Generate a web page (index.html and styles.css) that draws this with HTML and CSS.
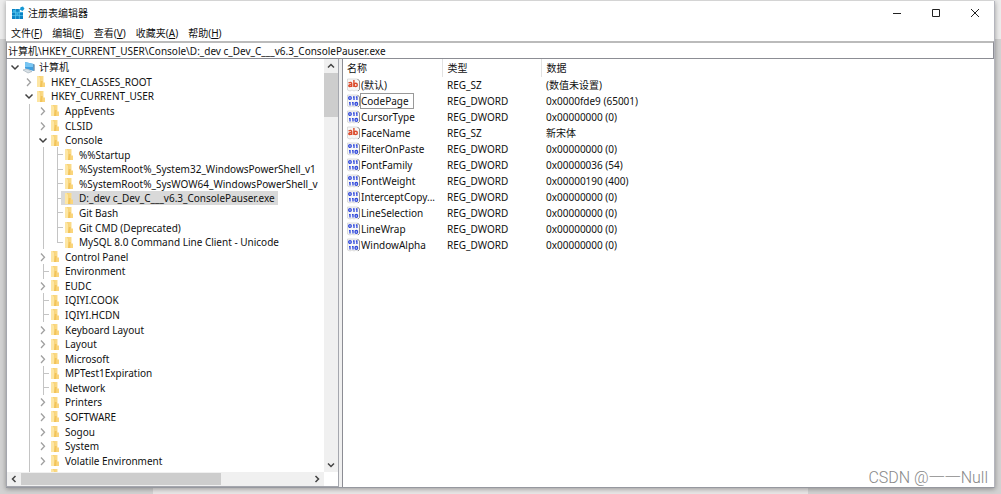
FILE: index.html
```html
<!DOCTYPE html>
<html lang="zh-CN">
<head>
<meta charset="utf-8">
<title>注册表编辑器</title>
<link rel="stylesheet" href="styles.css">
</head>
<body>
<svg class="sprite" aria-hidden="true">
  <defs>
    <linearGradient id="gold" x1="0" x2="1"><stop offset="0" stop-color="#f6cd68"/><stop offset="1" stop-color="#fbdc8c"/></linearGradient>
    <symbol id="folder" viewBox="0 0 10 13"><path d="M1 1h6.500v11H1z" fill="url(#gold)"/><path d="M1 1h1.500l1.500 2v9H1z" fill="#fde6a4"/><path d="M4.800 6h1.800v6H4z" fill="#f2c45a"/><path d="M6.500 7.500H9V12H6.500z" fill="#fad57c"/></symbol>
    <symbol id="right" viewBox="0 0 14 14"><path d="M5 3.500 8.500 7.300 5 11" fill="none" stroke="#a0a0a0" stroke-width="1.300"/></symbol>
    <symbol id="down" viewBox="0 0 14 14"><path d="M3.500 5.500 7 9l3.500-3.500" fill="none" stroke="#404040" stroke-width="1.500"/></symbol>
    <symbol id="string" viewBox="0 0 13 14"><path d="M.5 1h10l2 2v8.500l-1.500 1.500-2-1-2 1-2-1-2 1-2.500-1z" fill="#f7f7f7" stroke="#cfcfcf" stroke-width=".7"/><path d="M10.500 1l2 2v8.500L11 13" fill="none" stroke="#8b8b8b" stroke-width=".9"/><g fill="none" stroke="#dc4b2c" stroke-width="1.400"><path d="M1.500 4.900q3.200-1.200 3.200.8v3.200M4.700 6.400c-4-.2-3.700 3.300-.2 1.700M6.900 2v7"/><ellipse cx="8.700" cy="6.900" rx="1.600" ry="1.600"/></g></symbol>
    <symbol id="binary" viewBox="0 0 13 14"><path d="M.5 1h10l2 2v8.500l-1.500 1.500-2-1-2 1-2-1-2 1-2.500-1z" fill="#f7f7f7" stroke="#cfcfcf" stroke-width=".7"/><path d="M10.500 1l2 2v8.500L11 13" fill="none" stroke="#8b8b8b" stroke-width=".9"/><g fill="none" stroke="#3049dc" stroke-width="1.300"><ellipse cx="3" cy="4" rx="1.300" ry="1.400"/><path d="M6 3h1v3M8.900 3h1v3M2 8.600h1v3M5 8.600h1v3"/><ellipse cx="9.300" cy="9.900" rx="1.300" ry="1.400"/></g></symbol>
  </defs>
</svg>
<div class="desktop">
<main class="window">
  <header class="titlebar">
    <svg class="app-icon" viewBox="0 0 14 14"><path d="M1 3h8v3h3v7H1z" fill="#0b82c4"/><path d="M9.500 1.200 12 .5l1.500 2.300L11.500 5 9 3.700z" fill="#1598d4"/><path d="M1 6.300h11M1 9.600h11M4.600 3v10M8.300 3v10" stroke="#63d0f5" stroke-width=".7"/><path d="M2 4h2v2H2zM5.300 7h2v2h-2z" fill="#35b5e8"/></svg>
    <h1 class="title">注册表编辑器</h1>
    <div class="caption">
      <button aria-label="最小化"><svg viewBox="0 0 10 10"><path d="M1 5.500h8" /></svg></button>
      <button aria-label="最大化"><svg viewBox="0 0 10 10"><path d="M1.500 1.500h7v7h-7z"/></svg></button>
      <button aria-label="关闭"><svg viewBox="0 0 10 10"><path d="m1 1 8 8M9 1 1 9"/></svg></button>
    </div>
  </header>
  <nav class="menubar">
    <button>文件(<u>F</u>)</button><button>编辑(<u>E</u>)</button><button>查看(<u>V</u>)</button><button>收藏夹(<u>A</u>)</button><button>帮助(<u>H</u>)</button>
  </nav>
  <input class="address" aria-label="地址" value="计算机\HKEY_CURRENT_USER\Console\D:_dev c_Dev_C___v6.3_ConsolePauser.exe">
  <div class="panes">
    <section class="tree-pane">
      <ul class="tree" role="tree">
        <li role="treeitem" aria-level="1"><svg class="node"><use href="#down"/></svg><svg class="computer" viewBox="0 0 14 13"><path d="M3 1l8.500 2v7L3 7.500z" fill="#3f9fe0"/><path d="M3 1l8.500 2v3L3 6z" fill="#78c5f2"/><path d="M11.500 3l1 .5v6.300l-1 .2z" fill="#35648e"/><path d="M1 9l4-1 5 2.500-4 1.500z" fill="#d7e0e6" stroke="#9caab3" stroke-width=".6"/></svg><span>计算机</span></li>
        <li role="treeitem" aria-level="2"><i></i><svg class="node"><use href="#right"/></svg><svg class="folder"><use href="#folder"/></svg><span>HKEY_CLASSES_ROOT</span></li>
        <li role="treeitem" aria-level="2"><i></i><svg class="node"><use href="#down"/></svg><svg class="folder"><use href="#folder"/></svg><span>HKEY_CURRENT_USER</span></li>
        <li role="treeitem" aria-level="3"><i></i><i class="line"></i><svg class="node"><use href="#right"/></svg><svg class="folder"><use href="#folder"/></svg><span>AppEvents</span></li>
        <li role="treeitem" aria-level="3"><i></i><i class="line"></i><svg class="node"><use href="#right"/></svg><svg class="folder"><use href="#folder"/></svg><span>CLSID</span></li>
        <li role="treeitem" aria-level="3"><i></i><i class="line"></i><svg class="node"><use href="#down"/></svg><svg class="folder"><use href="#folder"/></svg><span>Console</span></li>
        <li role="treeitem" aria-level="4"><i></i><i class="line"></i><i class="line"></i><i class="line leaf"></i><svg class="folder"><use href="#folder"/></svg><span>%%Startup</span></li>
        <li role="treeitem" aria-level="4"><i></i><i class="line"></i><i class="line"></i><i class="line leaf"></i><svg class="folder"><use href="#folder"/></svg><span>%SystemRoot%_System32_WindowsPowerShell_v1</span></li>
        <li role="treeitem" aria-level="4"><i></i><i class="line"></i><i class="line"></i><i class="line leaf"></i><svg class="folder"><use href="#folder"/></svg><span>%SystemRoot%_SysWOW64_WindowsPowerShell_v</span></li>
        <li role="treeitem" aria-level="4" aria-selected="true"><i></i><i class="line"></i><i class="line"></i><i class="line leaf"></i><b class="selected"><svg class="folder"><use href="#folder"/></svg><span>D:_dev c_Dev_C___v6.3_ConsolePauser.exe</span></b></li>
        <li role="treeitem" aria-level="4"><i></i><i class="line"></i><i class="line"></i><i class="line leaf"></i><svg class="folder"><use href="#folder"/></svg><span>Git Bash</span></li>
        <li role="treeitem" aria-level="4"><i></i><i class="line"></i><i class="line"></i><i class="line leaf"></i><svg class="folder"><use href="#folder"/></svg><span>Git CMD (Deprecated)</span></li>
        <li role="treeitem" aria-level="4"><i></i><i class="line"></i><i class="line"></i><i class="line leaf last"></i><svg class="folder"><use href="#folder"/></svg><span>MySQL 8.0 Command Line Client - Unicode</span></li>
        <li role="treeitem" aria-level="3"><i></i><i class="line"></i><svg class="node"><use href="#right"/></svg><svg class="folder"><use href="#folder"/></svg><span>Control Panel</span></li>
        <li role="treeitem" aria-level="3"><i></i><i class="line"></i><i class="line leaf"></i><svg class="folder"><use href="#folder"/></svg><span>Environment</span></li>
        <li role="treeitem" aria-level="3"><i></i><i class="line"></i><svg class="node"><use href="#right"/></svg><svg class="folder"><use href="#folder"/></svg><span>EUDC</span></li>
        <li role="treeitem" aria-level="3"><i></i><i class="line"></i><i class="line leaf"></i><svg class="folder"><use href="#folder"/></svg><span>IQIYI.COOK</span></li>
        <li role="treeitem" aria-level="3"><i></i><i class="line"></i><i class="line leaf"></i><svg class="folder"><use href="#folder"/></svg><span>IQIYI.HCDN</span></li>
        <li role="treeitem" aria-level="3"><i></i><i class="line"></i><svg class="node"><use href="#right"/></svg><svg class="folder"><use href="#folder"/></svg><span>Keyboard Layout</span></li>
        <li role="treeitem" aria-level="3"><i></i><i class="line"></i><svg class="node"><use href="#right"/></svg><svg class="folder"><use href="#folder"/></svg><span>Layout</span></li>
        <li role="treeitem" aria-level="3"><i></i><i class="line"></i><svg class="node"><use href="#right"/></svg><svg class="folder"><use href="#folder"/></svg><span>Microsoft</span></li>
        <li role="treeitem" aria-level="3"><i></i><i class="line"></i><i class="line leaf"></i><svg class="folder"><use href="#folder"/></svg><span>MPTest1Expiration</span></li>
        <li role="treeitem" aria-level="3"><i></i><i class="line"></i><i class="line leaf"></i><svg class="folder"><use href="#folder"/></svg><span>Network</span></li>
        <li role="treeitem" aria-level="3"><i></i><i class="line"></i><svg class="node"><use href="#right"/></svg><svg class="folder"><use href="#folder"/></svg><span>Printers</span></li>
        <li role="treeitem" aria-level="3"><i></i><i class="line"></i><svg class="node"><use href="#right"/></svg><svg class="folder"><use href="#folder"/></svg><span>SOFTWARE</span></li>
        <li role="treeitem" aria-level="3"><i></i><i class="line"></i><svg class="node"><use href="#right"/></svg><svg class="folder"><use href="#folder"/></svg><span>Sogou</span></li>
        <li role="treeitem" aria-level="3"><i></i><i class="line"></i><svg class="node"><use href="#right"/></svg><svg class="folder"><use href="#folder"/></svg><span>System</span></li>
        <li role="treeitem" aria-level="3"><i></i><i class="line"></i><svg class="node"><use href="#right"/></svg><svg class="folder"><use href="#folder"/></svg><span>Volatile Environment</span></li>
        <li class="cut" role="presentation"><i></i><i class="line"></i><i></i><svg class="folder"><use href="#folder"/></svg></li>
      </ul>
      <div class="scroll vertical">
        <button aria-label="向上"><svg viewBox="0 0 8 8"><path d="m1 5.500 3-3 3 3"/></svg></button>
        <div class="thumb"></div>
        <button aria-label="向下"><svg viewBox="0 0 8 8"><path d="m1 2.500 3 3 3-3"/></svg></button>
      </div>
      <div class="scroll horizontal">
        <button aria-label="向左"><svg viewBox="0 0 8 8"><path d="m5.500 1-3 3 3 3"/></svg></button>
        <div class="thumb"></div>
        <button aria-label="向右"><svg viewBox="0 0 8 8"><path d="m2.500 1 3 3-3 3"/></svg></button>
      </div>
    </section>
    <section class="list-pane">
      <table class="values">
        <colgroup><col class="narrow"><col class="narrow"><col></colgroup>
        <thead><tr><th>名称</th><th>类型</th><th>数据</th></tr></thead>
        <tbody>
          <tr><td><svg><use href="#string"/></svg><span>(默认)</span></td><td>REG_SZ</td><td>(数值未设置)</td></tr>
          <tr><td><svg><use href="#binary"/></svg><span class="focused">CodePage</span></td><td>REG_DWORD</td><td>0x0000fde9 (65001)</td></tr>
          <tr><td><svg><use href="#binary"/></svg><span>CursorType</span></td><td>REG_DWORD</td><td>0x00000000 (0)</td></tr>
          <tr><td><svg><use href="#string"/></svg><span>FaceName</span></td><td>REG_SZ</td><td>新宋体</td></tr>
          <tr><td><svg><use href="#binary"/></svg><span>FilterOnPaste</span></td><td>REG_DWORD</td><td>0x00000000 (0)</td></tr>
          <tr><td><svg><use href="#binary"/></svg><span>FontFamily</span></td><td>REG_DWORD</td><td>0x00000036 (54)</td></tr>
          <tr><td><svg><use href="#binary"/></svg><span>FontWeight</span></td><td>REG_DWORD</td><td>0x00000190 (400)</td></tr>
          <tr><td><svg><use href="#binary"/></svg><span>InterceptCopy...</span></td><td>REG_DWORD</td><td>0x00000000 (0)</td></tr>
          <tr><td><svg><use href="#binary"/></svg><span>LineSelection</span></td><td>REG_DWORD</td><td>0x00000000 (0)</td></tr>
          <tr><td><svg><use href="#binary"/></svg><span>LineWrap</span></td><td>REG_DWORD</td><td>0x00000000 (0)</td></tr>
          <tr><td><svg><use href="#binary"/></svg><span>WindowAlpha</span></td><td>REG_DWORD</td><td>0x00000000 (0)</td></tr>
        </tbody>
      </table>
    </section>
  </div>
</main>
<div class="watermark">CSDN @一一Null</div>
</div>
</body>
</html>
```
FILE: styles.css
```css
* { box-sizing: border-box; }
body {
  margin: 0;
  font: 10px/14px "Noto Sans", "Noto Sans CJK SC", sans-serif;
  color: #111;
}
button {
  font: inherit;
  color: inherit;
  background: none;
  border: 0;
  padding: 0;
}
svg { display: block; flex: none; }
.sprite { position: absolute; width: 0; height: 0; }

.desktop {
  position: relative;
  display: flex;
  min-height: 100vh;
  padding: 1px 6px 6px;
  background:
    linear-gradient(#ececec, #ececec) 0 0 / 100% 39px no-repeat,
    linear-gradient(#e8e6e6, #e8e6e6) 153px 100% / 655px 6px no-repeat,
    #d2d2d2;
}
.window {
  flex: 1;
  min-width: 0;
  display: flex;
  flex-direction: column;
  background: #fff;
  border-bottom: 1px solid #96989f;
  border-right: 1px solid #b4b5bd;
  box-shadow: 0 1px 5px rgba(0, 0, 0, .35);
}

.titlebar {
  display: flex;
  align-items: center;
  height: 23px;
  padding-left: 5px;
}
.app-icon { width: 14px; height: 14px; }
.title { margin: 0 auto 0 3px; font-size: 10px; font-weight: 400; }
.caption { display: flex; }
.caption button {
  display: grid;
  place-items: center;
  width: 39px;
  height: 22px;
}
.caption svg {
  width: 10px;
  height: 10px;
  fill: none;
  stroke: #222;
}

.menubar {
  display: flex;
  gap: 10px;
  height: 17px;
  padding-left: 5px;
}
.menubar u { text-underline-offset: 1px; }

.address {
  width: 100%;
  height: 18px;
  padding: 0 1px;
  border: 1px solid #8c8d94;
  border-top: 2px solid #bbb;
  outline: 0;
  background: #fff;
  color: inherit;
  font: inherit;
}

.panes { flex: 1; display: flex; gap: 3px; background: #f0f0f0; }
.tree-pane {
  flex: none;
  width: 333px;
  display: grid;
  grid-template: 1fr 14px / 1fr 14px;
  background: #fff;
  border: 1px solid #a5a7ae;
  border-top: 0;
}
.tree {
  min-width: 0;
  overflow: hidden;
  display: grid;
  grid-template-rows: repeat(28, minmax(14px, 1fr)) 4px;
  margin: 0;
  padding: 1px 0 0 1px;
  list-style: none;
}
.tree li {
  display: flex;
  align-items: center;
  white-space: nowrap;
  min-width: 0;
}
.tree i, .node { flex: none; width: 14px; height: 14px; }
.tree i { height: 100%; }
.line {
  background: linear-gradient(#c4c4c4, #c4c4c4) 7px 0 / 1px 100% no-repeat;
}
.line.leaf {
  background:
    linear-gradient(#c4c4c4, #c4c4c4) 7px 0 / 1px 100% no-repeat,
    linear-gradient(#c4c4c4, #c4c4c4) 7px 50% / 6px 1px no-repeat;
}
.line.last {
  background:
    linear-gradient(#c4c4c4, #c4c4c4) 7px 0 / 1px 50% no-repeat,
    linear-gradient(#c4c4c4, #c4c4c4) 7px 50% / 6px 1px no-repeat;
}
.folder { width: 10px; height: 13px; margin-right: 5px; }
.computer { width: 14px; height: 13px; margin-right: 3px; }
.cut { overflow: hidden; }
.tree .cut { align-items: flex-start; }
.selected {
  display: flex;
  align-items: center;
  height: 14px;
  margin-left: -3px;
  padding: 0 3px;
  background: #d9d9d9;
  font-weight: 400;
}

.scroll { display: flex; background: #f0f0f0; }
.scroll button { display: grid; place-items: center; width: 14px; height: 14px; }
.scroll svg { width: 8px; height: 8px; fill: none; stroke: #444; stroke-width: 1.500; }
.thumb { background: #cdcdcd; }
.vertical { flex-direction: column; }
.vertical .thumb { height: 44px; margin-bottom: auto; }
.horizontal .thumb { width: 63%; margin: 1px auto 1px 0; }

.list-pane {
  flex: 1;
  min-width: 0;
  background: #fff;
  border-left: 1px solid #8c8d94;
}
.values {
  width: 100%;
  table-layout: fixed;
  border-collapse: collapse;
}
.narrow { width: 99px; }
.values th, .values td {
  height: 16px;
  padding: 0 0 0 5px;
  text-align: left;
  font-weight: 400;
  white-space: nowrap;
}
.values th { height: 18px; border-right: 1px solid #e2e2e2; }
.values th:last-child { border-right: 0; }
.values th:first-child, .values td:first-child { padding-left: 4px; }
.values td:first-child { display: flex; align-items: center; }
.values svg { width: 13px; height: 14px; }
.values span { border: 1px solid transparent; }
.values .focused { padding-right: 4px; border-color: #999; }

.watermark {
  position: absolute;
  right: 13px;
  bottom: 6px;
  font: 300 16px/20px Roboto, "Noto Sans CJK SC", sans-serif;
  color: #888;
}
```
